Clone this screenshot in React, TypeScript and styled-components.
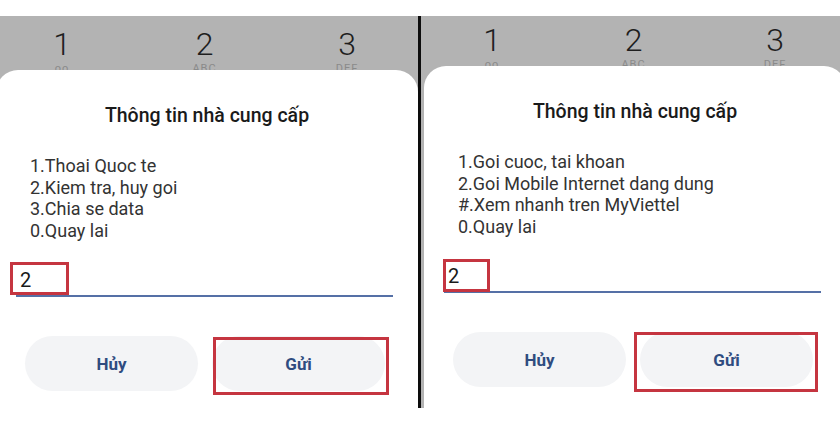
import React from 'react'
import styled, { createGlobalStyle } from 'styled-components'

const GlobalStyle = createGlobalStyle`
  html, body {
    margin: 0;
    padding: 0;
    background: #ffffff;
  }
  body {
    font-family: Roboto, 'Noto Sans', 'Liberation Sans', sans-serif;
  }
`

type Box = { left: number; top: number; width: number; height: number }

type Shot = {
  bandHeight: number
  bandTop: number
  padLeft: number
  padRight: number
  dialogLeft: number
  options: string[]
  inputMark: Box
  sendMark: Box
}

const shots: Shot[] = [
  {
    bandHeight: 54,
    bandTop: 12,
    padLeft: 32,
    padRight: 41,
    dialogLeft: -4,
    options: ['1.Thoai Quoc te', '2.Kiem tra, huy goi', '3.Chia se data', '0.Quay lai'],
    inputMark: { left: 14, top: 192, width: 59, height: 33 },
    sendMark: { left: 217, top: 267, width: 176, height: 58 },
  },
  {
    bandHeight: 50,
    bandTop: 8,
    padLeft: 41,
    padRight: 35,
    dialogLeft: 3,
    options: [
      '1.Goi cuoc, tai khoan',
      '2.Goi Mobile Internet dang dung',
      '#.Xem nhanh tren MyViettel',
      '0.Quay lai',
    ],
    inputMark: { left: 19, top: 193, width: 47, height: 33 },
    sendMark: { left: 210, top: 266, width: 184, height: 60 },
  },
]

const keys = [
  { digit: '1', letters: 'oo' },
  { digit: '2', letters: 'ABC' },
  { digit: '3', letters: 'DEF' },
]

const App = () => {
  return (
    <>
      <GlobalStyle />
      <Page>
        <Row>
          <Panel $width={418}>
            <Screen shot={shots[0]} />
          </Panel>
          <Divider />
          <Panel $width={419}>
            <Screen shot={shots[1]} />
          </Panel>
        </Row>
      </Page>
    </>
  )
}

const Screen = ({ shot }: { shot: Shot }) => (
  <>
    <KeyBand $height={shot.bandHeight} $top={shot.bandTop} $left={shot.padLeft} $right={shot.padRight}>
      {keys.map((k) => (
        <Key key={k.digit}>
          <Digit>{k.digit}</Digit>
          <Letters>{k.letters}</Letters>
        </Key>
      ))}
    </KeyBand>
    <Dialog $left={shot.dialogLeft}>
      <Title>Thông tin nhà cung cấp</Title>
      <Options>
        {shot.options.map((o) => (
          <Option key={o}>{o}</Option>
        ))}
      </Options>
      <InputLine>2</InputLine>
      <Buttons>
        <PillButton>Hủy</PillButton>
        <PillButton>Gửi</PillButton>
      </Buttons>
      {[shot.inputMark, shot.sendMark].map((m, i) => (
        <Mark key={i} style={{ left: m.left, top: m.top, width: m.width, height: m.height }} />
      ))}
    </Dialog>
  </>
)

const Page = styled.div`
  width: 840px;
  height: 425px;
  padding-top: 16px;
  box-sizing: border-box;
  background: #ffffff;
  overflow: hidden;
`

const Row = styled.div`
  display: flex;
  height: 392px;
`

const Panel = styled.div<{ $width: number }>`
  width: ${(p) => p.$width}px;
  flex: none;
  display: flex;
  flex-direction: column;
  background: #b3b3b3;
  overflow: hidden;
`

const Divider = styled.div`
  width: 3px;
  flex: none;
  background: #0d0d0d;
`

const KeyBand = styled.div<{ $height: number; $top: number; $left: number; $right: number }>`
  height: ${(p) => p.$height}px;
  flex: none;
  box-sizing: border-box;
  padding: ${(p) => p.$top}px ${(p) => p.$right}px 0 ${(p) => p.$left}px;
  display: flex;
  justify-content: space-between;
  overflow: hidden;
`

const Key = styled.div`
  width: 60px;
  display: flex;
  flex-direction: column;
  align-items: center;
`

const Digit = styled.div`
  font-size: 32px;
  line-height: 32px;
  font-weight: 300;
  color: #1e1e1e;
`

const Letters = styled.div`
  margin-top: 3px;
  font-size: 11px;
  line-height: 12px;
  color: #8a8a8a;
  letter-spacing: 1px;
`

const Dialog = styled.div<{ $left: number }>`
  position: relative;
  flex: 1;
  width: 422px;
  margin-left: ${(p) => p.$left}px;
  background: #ffffff;
  border-radius: 22px 22px 0 0;
  box-sizing: border-box;
  padding-top: 33px;
`

const Title = styled.div`
  text-align: center;
  font-size: 19.5px;
  line-height: 26px;
  font-weight: 500;
  color: #1a1a1a;
`

const Options = styled.div`
  margin-top: 26px;
  padding-left: 34px;
`

const Option = styled.div`
  font-size: 18px;
  line-height: 21.5px;
  color: #333333;
`

const InputLine = styled.div`
  margin: 20px 25px 0 20px;
  height: 36px;
  box-sizing: border-box;
  padding: 7px 0 0 4px;
  border-bottom: 2px solid #5570a6;
  font-size: 20px;
  line-height: 24px;
  color: #1a1a1a;
`

const Buttons = styled.div`
  display: flex;
  gap: 14px;
  margin-top: 39px;
  padding: 0 33px 0 29px;
`

const PillButton = styled.div`
  flex: 1;
  height: 55px;
  border-radius: 28px;
  background: #f3f4f6;
  display: flex;
  align-items: center;
  justify-content: center;
  font-size: 17px;
  font-weight: 700;
  color: #2f4c80;
`

const Mark = styled.div`
  position: absolute;
  box-sizing: border-box;
  border: 3px solid #c53540;
`

export default App
